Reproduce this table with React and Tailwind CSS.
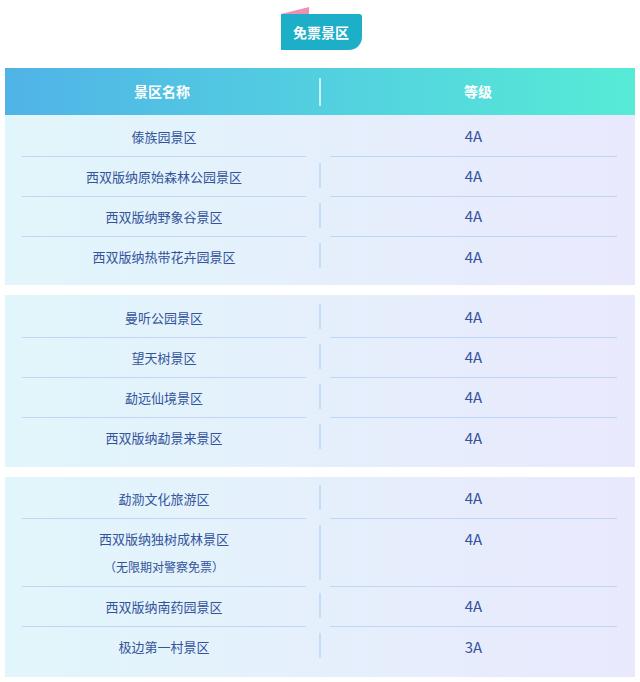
const groups = [
  {
    pad: "pt-[2px] pb-[8px]",
    rows: [
      { name: "傣族园景区", level: "4A", noDivider: true },
      { name: "西双版纳原始森林公园景区", level: "4A" },
      { name: "西双版纳野象谷景区", level: "4A" },
      { name: "西双版纳热带花卉园景区", level: "4A" },
    ],
  },
  {
    pad: "pt-[3px] pb-[9px]",
    rows: [
      { name: "曼听公园景区", level: "4A" },
      { name: "望天树景区", level: "4A" },
      { name: "勐远仙境景区", level: "4A" },
      { name: "西双版纳勐景来景区", level: "4A" },
    ],
  },
  {
    pad: "pt-[2px] pb-[10px]",
    rows: [
      { name: "勐泐文化旅游区", level: "4A" },
      { name: "西双版纳独树成林景区", note: "（无限期对警察免票）", level: "4A" },
      { name: "西双版纳南药园景区", level: "4A" },
      { name: "极边第一村景区", level: "3A" },
    ],
  },
];

function Row({ row, last }) {
  const line = last ? "" : "border-b border-[#bfd6f4]";
  if (row.note) {
    return (
      <div className="flex h-[68px]">
        <div className={`ml-[17px] mr-[13px] w-[284px] flex flex-col items-center pt-[9px] ${line}`}>
          <span className="text-[13px] leading-[22px]">{row.name}</span>
          <span className="text-[12px] leading-[16px] mt-[9px]">{row.note}</span>
        </div>
        <div className="w-[2px] bg-[#c4def7] mt-[6px] mb-[7px]" />
        <div className={`ml-[9px] mr-[18px] flex-1 flex justify-center pt-[9px] ${line}`}>
          <span className="text-[15px] leading-[22px]">{row.level}</span>
        </div>
      </div>
    );
  }
  return (
    <div className="flex h-[40px]">
      <div className={`ml-[17px] mr-[13px] w-[284px] flex items-center justify-center ${line}`}>
        <span className="text-[13px]">{row.name}</span>
      </div>
      <div className={`w-[2px] mt-[6px] mb-[9px] ${row.noDivider ? "" : "bg-[#c4def7]"}`} />
      <div className={`ml-[9px] mr-[18px] flex-1 flex items-center justify-center ${line}`}>
        <span className="text-[15px]">{row.level}</span>
      </div>
    </div>
  );
}

export default function App() {
  return (
    <div
      className="w-[640px] h-[682px] bg-white text-[#34539b] overflow-hidden"
      style={{ fontFamily: '"Noto Sans CJK SC", "Noto Sans", sans-serif' }}
    >
      <div className="flex justify-center pt-[7px]">
        <div className="flex flex-col items-start ml-[2px]">
          <svg className="block" width="28" height="7" viewBox="0 0 28 7">
            <polygon points="0,7 28,0 28,7" fill="#f28db4" />
          </svg>
          <div className="h-[36px] w-[81px] bg-[#1daec8] rounded-tr-[3px] rounded-br-[13px] flex items-center justify-center text-white font-bold text-[14px]">
            免票景区
          </div>
        </div>
      </div>

      <div className="mx-[5px] mt-[18px]">
        <div className="h-[47px] flex items-center bg-gradient-to-r from-[#50b3e7] to-[#57ebd6] text-white font-bold text-[14px]">
          <div className="w-[314px] text-center">景区名称</div>
          <div className="w-[2px] h-[28px] bg-white/70" />
          <div className="flex-1 text-center">等级</div>
        </div>

        {groups.map((g, gi) => (
          <div
            key={gi}
            className={`bg-gradient-to-r from-[#e1f6fb] to-[#e9e9fd] ${g.pad} ${gi > 0 ? "mt-[10px]" : ""}`}
          >
            {g.rows.map((r, ri) => (
              <Row key={ri} row={r} last={ri === g.rows.length - 1} />
            ))}
          </div>
        ))}
      </div>
    </div>
  );
}
